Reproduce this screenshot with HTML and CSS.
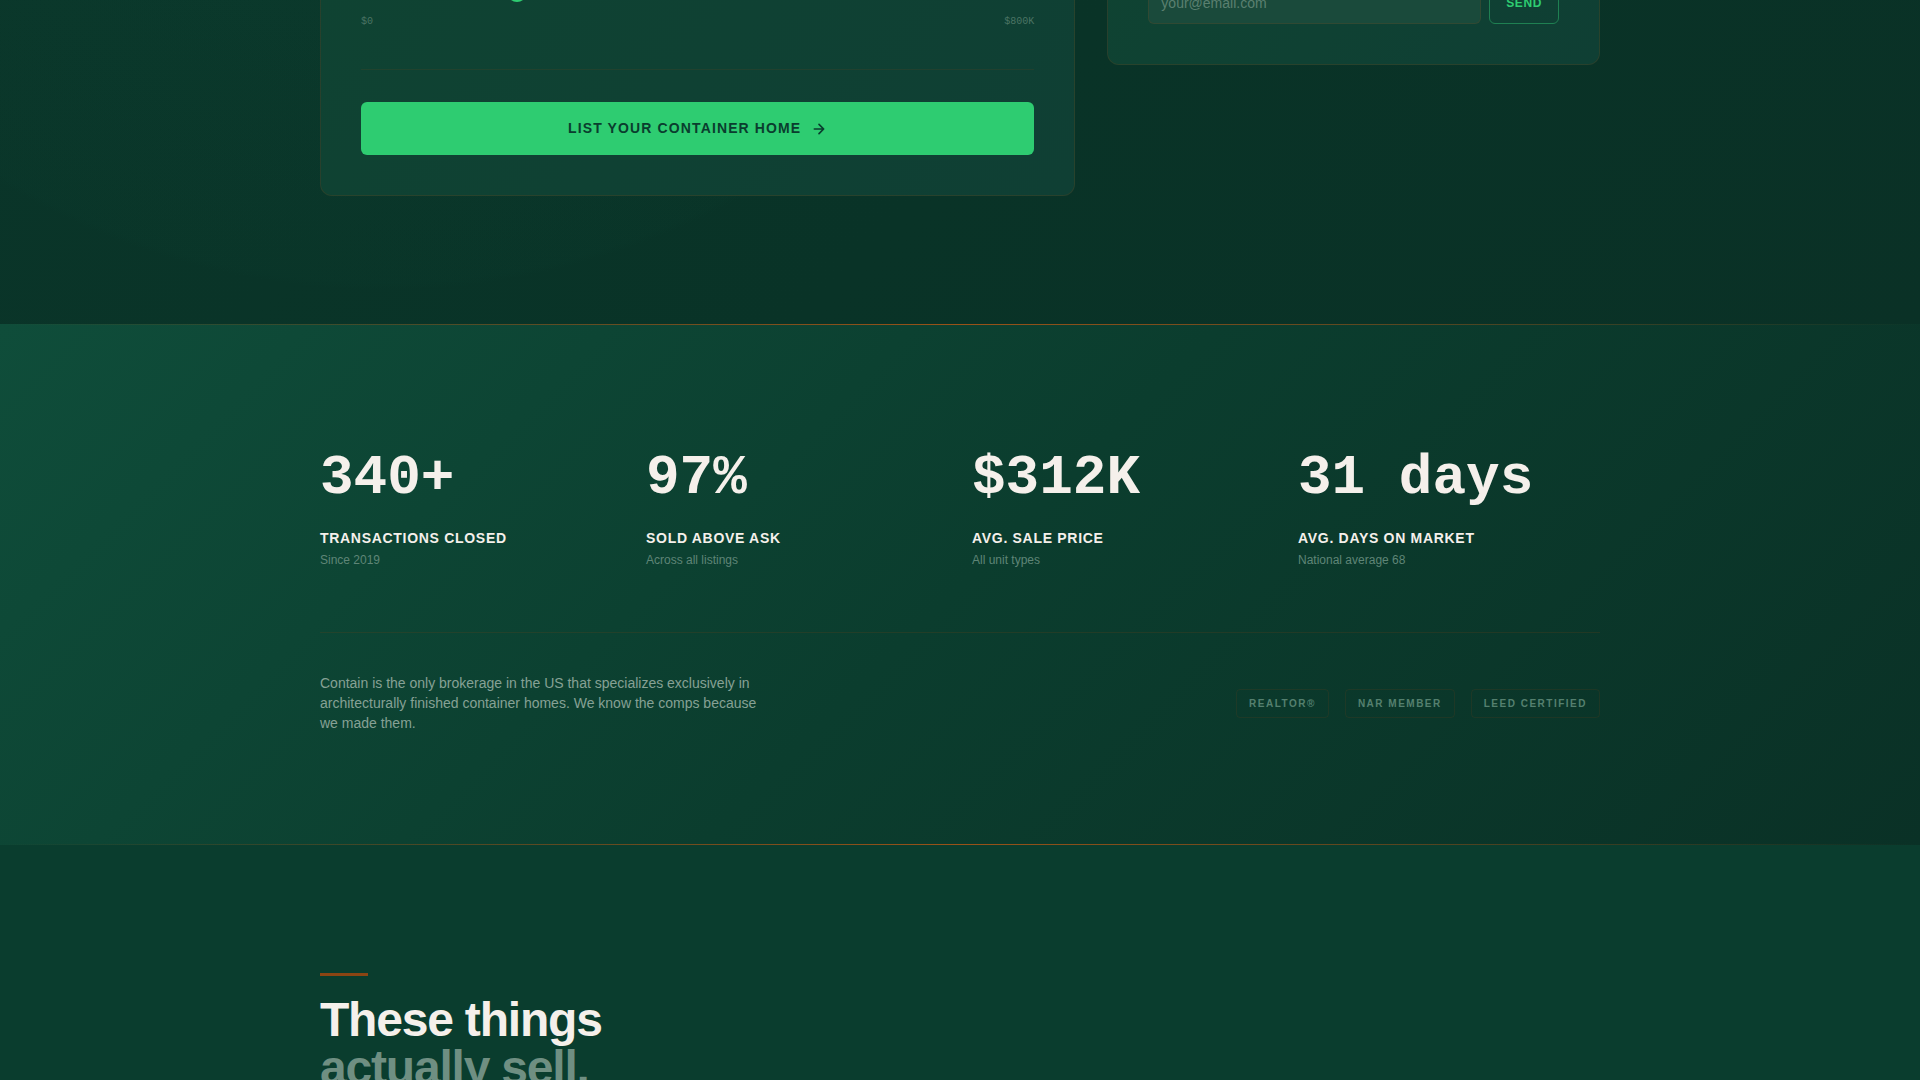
FILE: index.html
```html
<!DOCTYPE html>
<html lang="en">
<head>
    <meta charset="UTF-8">
    <meta name="viewport" content="width=device-width, initial-scale=1.0">
    <title>Contain</title>
    <link rel="stylesheet" href="styles.css">
</head>
<body>
    <section class="estimate">
        <div class="container estimate-grid">
            <form class="card">
                <input class="range" type="range" min="0" max="800" value="179" aria-label="Asking price">
                <div class="range-labels">
                    <span>$0</span>
                    <span>$800K</span>
                </div>
                <div class="card-footer">
                    <button class="btn-primary" type="button">
                        List your container home
                        <svg width="16" height="16" viewBox="0 0 24 24" fill="none" stroke="currentColor" stroke-width="2.5" stroke-linecap="round" stroke-linejoin="round" aria-hidden="true">
                            <path d="M5 12h14M12 5l7 7-7 7"/>
                        </svg>
                    </button>
                </div>
            </form>
            <form class="card">
                <div class="email-row">
                    <input class="email" type="email" placeholder="your@email.com" aria-label="Email">
                    <button class="btn-outline" type="button">Send</button>
                </div>
            </form>
        </div>
    </section>

    <section class="stats">
        <div class="container">
            <div class="stats-grid">
                <div>
                    <div class="stat-value">340+</div>
                    <div class="stat-label">Transactions closed</div>
                    <div class="stat-note">Since 2019</div>
                </div>
                <div>
                    <div class="stat-value">97%</div>
                    <div class="stat-label">Sold above ask</div>
                    <div class="stat-note">Across all listings</div>
                </div>
                <div>
                    <div class="stat-value">$312K</div>
                    <div class="stat-label">Avg. sale price</div>
                    <div class="stat-note">All unit types</div>
                </div>
                <div>
                    <div class="stat-value">31 days</div>
                    <div class="stat-label">Avg. days on market</div>
                    <div class="stat-note">National average 68</div>
                </div>
            </div>
            <div class="stats-footer">
                <p>Contain is the only brokerage in the US that specializes exclusively in architecturally finished container homes. We know the comps because we made them.</p>
                <div class="badges">
                    <span class="badge">REALTOR®</span>
                    <span class="badge">NAR Member</span>
                    <span class="badge">LEED Certified</span>
                </div>
            </div>
        </div>
    </section>

    <section class="sold">
        <div class="container">
            <div class="accent"></div>
            <h2>These things<br><span>actually sell.</span></h2>
        </div>
    </section>
</body>
</html>
```
FILE: styles.css
```css
* {
    box-sizing: border-box;
}
body {
    margin: 0;
    font-family: "Liberation Sans", Arial, sans-serif;
    background-color: #0a3d2e;
    color: #f5f0eb;
}
.container {
    max-width: 1280px;
    margin: 0 auto;
}

/* estimate */
.estimate {
    padding-bottom: 128px;
    overflow: hidden;
    background:
        radial-gradient(circle 740px at 20% -450px, rgba(15, 77, 58, 0.35), rgba(15, 77, 58, 0.05) 99%, transparent),
        linear-gradient(135deg, #0a3529 0%, #093327 50%, #0a3126 100%);
}
.estimate-grid {
    display: grid;
    grid-template-columns: 23fr 15fr;
    gap: 32px;
    align-items: start;
    margin-top: -60px;
}
.card {
    padding: 40px;
    border: 1px solid rgba(139, 69, 19, 0.2);
    border-radius: 12px;
    background: linear-gradient(135deg, #0f4332, #0f3f34);
}
.range {
    display: block;
    width: 100%;
    height: 22px;
    margin: 0;
    appearance: none;
    background: linear-gradient(#1f5a47, #1f5a47) center / 100% 4px no-repeat;
}
.range::-webkit-slider-thumb {
    appearance: none;
    width: 20px;
    height: 20px;
    border-radius: 50%;
    background-color: #2ecc71;
}
.range-labels {
    display: flex;
    justify-content: space-between;
    margin-top: 11px;
    font-family: "Liberation Mono", monospace;
    font-size: 10px;
    line-height: 16px;
    color: #4b7464;
}
.card-footer {
    margin-top: 39px;
    padding-top: 32px;
    border-top: 1px solid rgba(139, 69, 19, 0.15);
}
.btn-primary {
    display: flex;
    justify-content: center;
    align-items: center;
    gap: 10px;
    width: 100%;
    padding: 16px;
    border: none;
    border-radius: 6px;
    background-color: #2ecc71;
    color: #0a3d2e;
    font: bold 14px/21px "Liberation Sans", Arial, sans-serif;
    letter-spacing: 0.08em;
    text-transform: uppercase;
    cursor: pointer;
}
.email-row {
    display: flex;
    gap: 8px;
}
.email {
    flex: 1;
    min-width: 0;
    height: 43px;
    padding: 0 12px;
    border: 1px solid rgba(139, 69, 19, 0.2);
    border-radius: 6px;
    background-color: #1a4a3b;
    color: #f5f0eb;
    font: 14px "Liberation Sans", Arial, sans-serif;
}
.email::placeholder {
    color: #5a8070;
}
.btn-outline {
    padding: 0 16px;
    border: 1px solid #1f8052;
    border-radius: 6px;
    background: none;
    color: #2ecc71;
    font: bold 12px "Liberation Sans", Arial, sans-serif;
    letter-spacing: 0.05em;
    text-transform: uppercase;
    cursor: pointer;
}

/* stats */
.stats {
    padding: 112px 0;
    background:
        linear-gradient(90deg, transparent, #9a5218, transparent) top / 100% 1px no-repeat,
        linear-gradient(90deg, transparent, #9a5218, transparent) bottom / 100% 1px no-repeat,
        linear-gradient(135deg, #0f4d3a 0%, #0b3d2e 50%, #0a3126 100%);
}
.stats-grid {
    display: grid;
    grid-template-columns: repeat(4, 1fr);
    gap: 24px;
}
.stat-value {
    font-family: "Liberation Mono", monospace;
    font-size: 56px;
    font-weight: bold;
    line-height: 84px;
}
.stat-label {
    margin-top: 8px;
    font-size: 14px;
    font-weight: bold;
    line-height: 20px;
    letter-spacing: 0.05em;
    text-transform: uppercase;
}
.stat-note {
    margin-top: 4px;
    font-size: 12px;
    line-height: 16px;
    color: #5f8577;
}
.stats-footer {
    display: flex;
    justify-content: space-between;
    align-items: center;
    margin-top: 64px;
    padding-top: 40px;
    border-top: 1px solid rgba(139, 69, 19, 0.18);
}
.stats-footer p {
    max-width: 448px;
    margin: 0;
    font-size: 14px;
    line-height: 20px;
    color: #86a195;
}
.badges {
    display: flex;
    gap: 16px;
}
.badge {
    padding: 6px 12px;
    border: 1px solid rgba(139, 69, 19, 0.15);
    border-radius: 4px;
    font-size: 10px;
    font-weight: bold;
    line-height: 15px;
    letter-spacing: 0.15em;
    text-transform: uppercase;
    color: #55806f;
}

/* sold */
.sold {
    padding: 128px 0;
}
.accent {
    width: 48px;
    height: 3px;
    background-color: #8b4513;
}
.sold h2 {
    margin: 20px 0 0;
    font-size: 48px;
    line-height: 48px;
    letter-spacing: -0.025em;
}
.sold h2 span {
    color: #6f8f82;
}
```
